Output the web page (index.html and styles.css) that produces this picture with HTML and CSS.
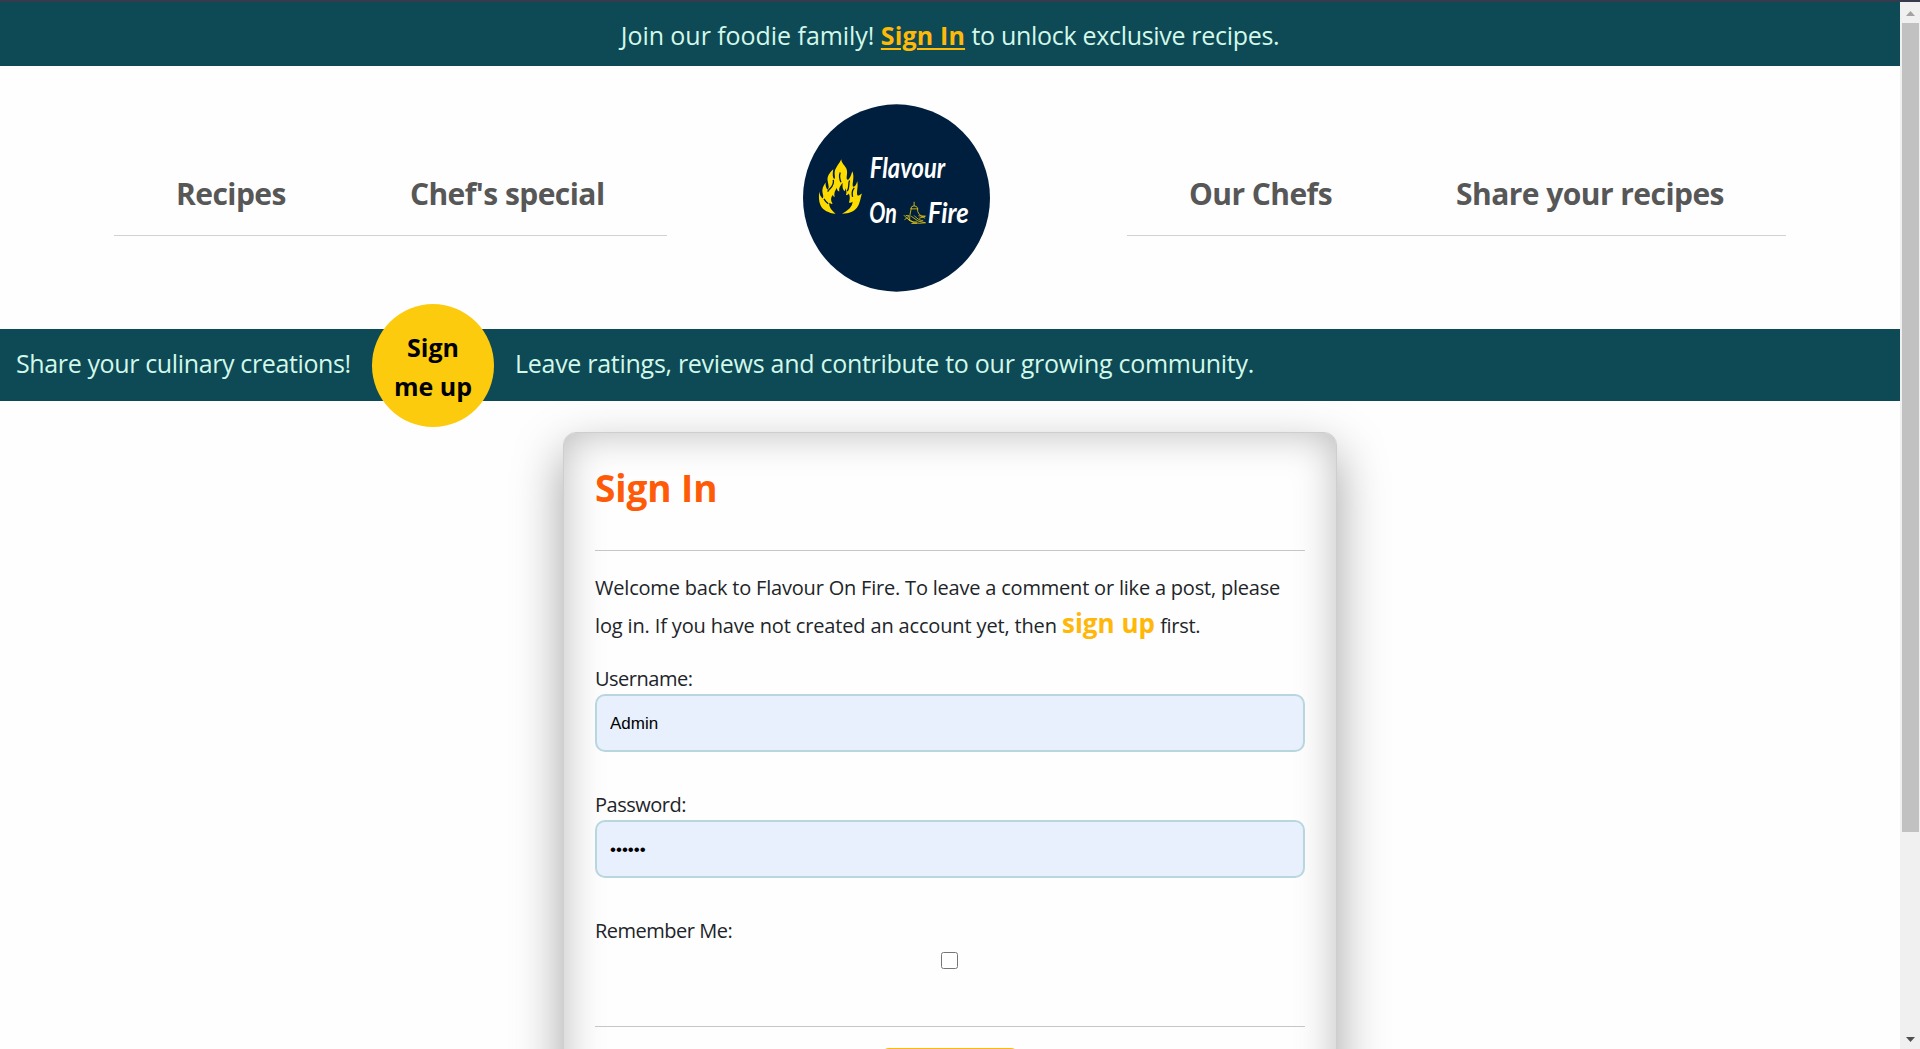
FILE: index.html
```html
<!DOCTYPE html>
<html lang="en">
<head>
<meta charset="utf-8">
<title>Flavour On Fire - Sign In</title>
<link rel="stylesheet" href="styles.css">
</head>
<body>
<div class="frame-edge"></div>
<div class="viewport">
  <div class="page">
    <div class="announce"><p class="announce-text"><span>Join our foodie family!</span> <a class="announce-link" href="#">Sign In</a> <span class="announce-rest">to unlock exclusive recipes.</span></p></div>
    <header class="header">
      <nav class="nav">
        <a class="nav-link" href="#">Recipes</a>
        <a class="nav-link" href="#">Chef's special</a>
      </nav>
      <a class="logo" href="#" aria-label="Flavour On Fire">
        <svg viewBox="39 42 562 563" width="187" height="188">
          <ellipse cx="320" cy="323.500" rx="281" ry="281.500" fill="#001f3e"/>
          <path fill="#ffdc00" d="M154 207 C148 222 134 232 134 249 C134 258 137 262 133 267 C128 263 127 253 130 237 C119 247 111 258 113 271 C114 282 119 290 114 299 C109 295 106 288 107 277 C99 288 95 298 98 309 C100 317 101 320 98 325 C92 320 89 313 88 304 C86 319 86 333 92 346 C99 360 116 369 137 371 C126 362 116 351 118 338 C122 341 125 342 128 341 C121 331 122 322 129 314 C130 319 132 321 134 320 C131 309 136 301 141 293 C141 300 143 302 148 304 C146 294 151 287 158 278 C157 291 158 299 164 303 C166 300 166 298 166 294 C171 302 170 309 168 315 C172 315 175 313 177 310 C181 320 180 329 177 337 C181 338 185 338 188 334 C188 350 174 361 156 371 C179 370 192 364 201 353 C210 342 211 326 216 310 C210 314 207 317 203 316 C198 309 206 289 202 273 C199 284 194 290 190 290 C184 284 196 261 187 243 C183 258 177 269 173 269 C166 266 175 250 170 237 C167 227 155 221 154 207 Z"/>
          <path fill="none" stroke="#001f3e" stroke-width="4" d="M113 304 C121 292 134 288 130 269 M179 271 C174 281 180 291 172 303 M102 326 Q108 336 115 341 M193 293 Q184 304 188 320 M151 247 Q146 260 153 276"/>
          <g fill="none" stroke="#ddc414" stroke-width="2.600" stroke-linecap="round" stroke-linejoin="round">
            <path d="M373 336 V347 M363 355 Q364 347 373 347 Q382 347 384 355 Z M364 356 Q360 371 359 390 M383 356 Q382 365 388 372 L399 381 M359 389 Q369 398 381 396 M343 376 L351 384 L345 388 M351 384 Q368 405 406 398 M355 378 Q350 387 359 391 M365 379 Q383 397 406 398 M374 377 Q388 393 399 391 M387 377 L407 378 L389 384 M399 380 L405 384 M349 376 L357 377 M366 400 H380"/>
          </g>
          <g class="logo-text" fill="#fff">
            <text x="240" y="262" textLength="226" lengthAdjust="spacingAndGlyphs">Flavour</text>
            <text x="238" y="398" textLength="83" lengthAdjust="spacingAndGlyphs">On</text>
            <text x="414" y="398" textLength="123" lengthAdjust="spacingAndGlyphs">Fire</text>
          </g>
        </svg>
      </a>
      <nav class="nav">
        <a class="nav-link" href="#">Our Chefs</a>
        <a class="nav-link" href="#">Share your recipes</a>
      </nav>
    </header>
    <div class="promo">
      <p class="promo-lead">Share your culinary creations!</p>
      <a class="promo-button" href="#">Sign<br>me up</a>
      <p class="promo-more">Leave ratings, reviews and contribute to our growing community.</p>
    </div>
    <main class="card">
      <h1 class="card-title">Sign In</h1>
      <hr class="rule">
      <p class="intro"><span class="intro-first">Welcome back to Flavour On Fire. To leave a comment or like a post, please</span><br><span class="intro-second">log in. If you have not created an account yet, then</span> <a class="intro-link" href="#">sign up</a> <span class="intro-last">first.</span></p>
      <form class="form">
        <label class="label" for="user">Username:</label>
        <input class="field" id="user" type="text" value="Admin">
        <label class="label" for="pass">Password:</label>
        <input class="field" id="pass" type="password" value="secret">
        <label class="label" for="remember">Remember Me:</label>
        <input class="check" id="remember" type="checkbox">
        <hr class="rule rule-end">
        <div class="submit"></div>
      </form>
    </main>
  </div>
  <div class="scrollbar">
    <svg class="arrow" width="9" height="5" viewBox="0 0 9 5"><path fill="#a3a3a3" d="M0 5 L4.500 0 L9 5Z"/></svg>
    <div class="thumb"></div>
    <svg class="arrow arrow-down" width="9" height="5" viewBox="0 0 9 5"><path fill="#505050" d="M0 0 L4.500 5 L9 0Z"/></svg>
  </div>
</div>
</body>
</html>
```
FILE: styles.css
```css
* { box-sizing: border-box; }
body {
  margin: 0;
  height: 1049px;
  overflow: hidden;
  font-family: "Open Sans", "Noto Sans", sans-serif;
  color: #212529;
  background: #fefefe;
}
p, h1 { margin: 0; }
a { text-decoration: none; color: inherit; }
.frame-edge { height: 2px; background: #353a4d; }
.viewport { display: flex; height: 1047px; }
.page { width: 1900px; height: 1047px; overflow: hidden; }

.announce {
  display: flex;
  justify-content: center;
  height: 64px;
  background: #0e4956;
  color: #d2f8e9;
  font-size: 25px;
  line-height: 67px;
  letter-spacing: -.05px;
  white-space: nowrap;
}
.announce-link { color: #ffb909; font-weight: 700; letter-spacing: .15px; text-decoration: underline; text-underline-offset: 3px; text-decoration-thickness: 2px; }
.announce-rest { letter-spacing: -.31px; }

.header { display: flex; height: 263px; padding: 38px 114px 0; justify-content: space-between; }
.nav { display: flex; height: 132px; padding-top: 61px; border-bottom: 1px solid #d2d2d2; }
.nav-link { padding: 0 62px; font-size: 30px; font-weight: 700; line-height: 58px; letter-spacing: -.55px; color: #575757; white-space: nowrap; }
.logo { display: block; width: 187px; height: 188px; }
.logo svg { display: block; }
.logo-text { font-family: "Lato", sans-serif; font-style: italic; font-weight: 700; font-size: 84px; }

.promo {
  position: relative;
  z-index: 1;
  display: flex;
  align-items: center;
  height: 72px;
  padding-left: 16px;
  background: #0e4956;
  color: #d2f8e9;
  font-size: 25px;
  white-space: nowrap;
}
.promo-lead { width: 356px; padding-bottom: 4px; letter-spacing: -.37px; }
.promo-more { padding-bottom: 4px; letter-spacing: -.28px; }
.promo-button {
  width: 122px;
  height: 123px;
  margin-right: 21px;
  padding-top: 24px;
  border-radius: 50%;
  background: #fccb0e;
  color: #000;
  font-weight: 700;
  line-height: 39px;
  text-align: center;
}

.card {
  width: 774px;
  height: 900px;
  margin: 31px auto 0;
  padding: 31px;
  border: 1px solid #cecece;
  border-radius: 13px;
  box-shadow: 0 20px 50px rgba(0, 0, 0, .37), inset 0 0 40px rgba(0, 0, 0, .27);
  background: #fefefe;
}
.card-title { height: 86px; font-size: 37px; line-height: 48px; letter-spacing: -.1px; color: #ff5a08; }
.rule { height: 1px; margin: 0; border: 0; background: #c6c6c6; }
.intro { margin-top: 18px; font-size: 20px; line-height: 38px; height: 92px; white-space: nowrap; }
.intro-first { letter-spacing: -.2px; }
.intro-second { letter-spacing: -.15px; }
.intro-last { letter-spacing: -.3px; }
.intro-link { font-size: 26px; font-weight: 700; line-height: 30px; color: #ffb70a; }
.label { display: block; height: 33px; font-size: 20px; line-height: 35px; letter-spacing: -.5px; }
.field {
  display: block;
  width: 710px;
  height: 58px;
  margin: 0 0 35px;
  padding: 2px 13px 0;
  border: 2px solid #b8d6dd;
  border-radius: 10px;
  background: #e8f0fe;
  color: #000;
  font-family: "Liberation Sans", sans-serif;
  font-size: 17px;
}
.check { display: block; width: 17px; height: 17px; margin: 6px 0 57px 346px; }
.submit { width: 138px; height: 60px; margin: 21px auto 0; border-radius: 8px; background: #ffb70a; }

.scrollbar { display: flex; flex-direction: column; align-items: center; width: 20px; padding: 9px 0 7px 1px; background: #f0f0f0; }
.thumb { width: 17px; height: 809px; margin-top: 7px; background: #c1c1c1; }
.arrow-down { margin-top: auto; }
```
